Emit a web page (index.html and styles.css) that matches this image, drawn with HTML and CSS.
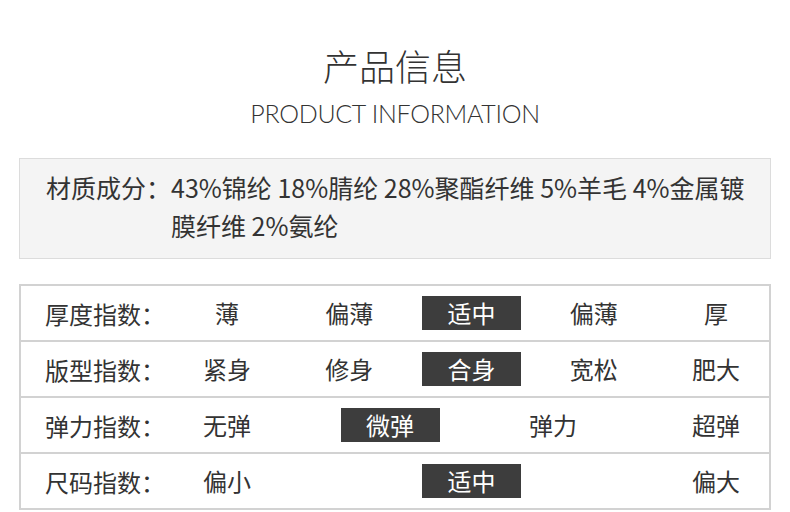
FILE: index.html
```html
<!DOCTYPE html>
<html lang="zh">
<head>
<meta charset="utf-8">
<link rel="stylesheet" href="styles.css">
</head>
<body>
<div class="page">
  <header class="head">
    <h1 class="title">产品信息</h1>
    <p class="subtitle">PRODUCT INFORMATION</p>
  </header>

  <section class="material">
    <span class="material-label">材质成分：</span>
    <span class="material-text">43%锦纶 18%腈纶 28%聚酯纤维 5%羊毛 4%金属镀膜纤维 2%氨纶</span>
  </section>

  <section class="table">
    <div class="row">
      <div class="label">厚度指数：</div>
      <div class="values">
        <span class="item"><span class="chip">薄</span></span>
        <span class="item"><span class="chip">偏薄</span></span>
        <span class="item"><span class="chip active">适中</span></span>
        <span class="item"><span class="chip">偏薄</span></span>
        <span class="item"><span class="chip">厚</span></span>
      </div>
    </div>
    <div class="row">
      <div class="label">版型指数：</div>
      <div class="values">
        <span class="item"><span class="chip">紧身</span></span>
        <span class="item"><span class="chip">修身</span></span>
        <span class="item"><span class="chip active">合身</span></span>
        <span class="item"><span class="chip">宽松</span></span>
        <span class="item"><span class="chip">肥大</span></span>
      </div>
    </div>
    <div class="row">
      <div class="label">弹力指数：</div>
      <div class="values">
        <span class="item"><span class="chip">无弹</span></span>
        <span class="item"><span class="chip active">微弹</span></span>
        <span class="item"><span class="chip">弹力</span></span>
        <span class="item"><span class="chip">超弹</span></span>
      </div>
    </div>
    <div class="row">
      <div class="label">尺码指数：</div>
      <div class="values">
        <span class="item"><span class="chip">偏小</span></span>
        <span class="item"><span class="chip active">适中</span></span>
        <span class="item"><span class="chip">偏大</span></span>
      </div>
    </div>
  </section>
</div>
</body>
</html>
```

FILE: styles.css
```css
* { box-sizing: border-box; }
html, body { margin: 0; padding: 0; background: #fff; }
body {
  font-family: "Noto Sans CJK SC", "Noto Sans", sans-serif;
  color: #333;
}
.page {
  width: 752px;
  margin: 0 auto;
  padding-top: 45px;
}
.head { text-align: center; }
.title {
  margin: 0;
  font-size: 36px;
  line-height: 40px;
  font-weight: 300;
  color: #333;
}
.subtitle {
  margin: 13px 0 0;
  font-family: Lato, "Noto Sans", sans-serif;
  font-weight: 300;
  font-size: 25px;
  line-height: 30px;
  letter-spacing: -0.3px;
  color: #333;
}
.material {
  margin-top: 30px;
  display: flex;
  background: #f4f4f4;
  border: 1px solid #dcdcdc;
  padding: 9px 20px 14px 26px;
  font-size: 25px;
  line-height: 38px;
  color: #333;
}
.material-label { flex: 0 0 auto; white-space: nowrap; }
.material-text { flex: 1; }
.table {
  margin-top: 25px;
  border: 2px solid #d2d2d2;
}
.row {
  display: flex;
  align-items: center;
  height: 56px;
  border-bottom: 2px solid #d2d2d2;
  font-size: 24px;
}
.row:last-child { height: 54px; border-bottom: 0; }
.label {
  flex: 0 0 145px;
  padding-left: 24px;
  white-space: nowrap;
}
.values {
  flex: 0 0 611px;
  display: flex;
  justify-content: space-between;
  margin-right: -8px;
}
.item {
  width: 122px;
  display: flex;
  justify-content: center;
}
.chip {
  width: 99px;
  height: 34px;
  line-height: 34px;
  text-align: center;
}
.chip.active {
  background: #3d3d3d;
  color: #fff;
}
```
